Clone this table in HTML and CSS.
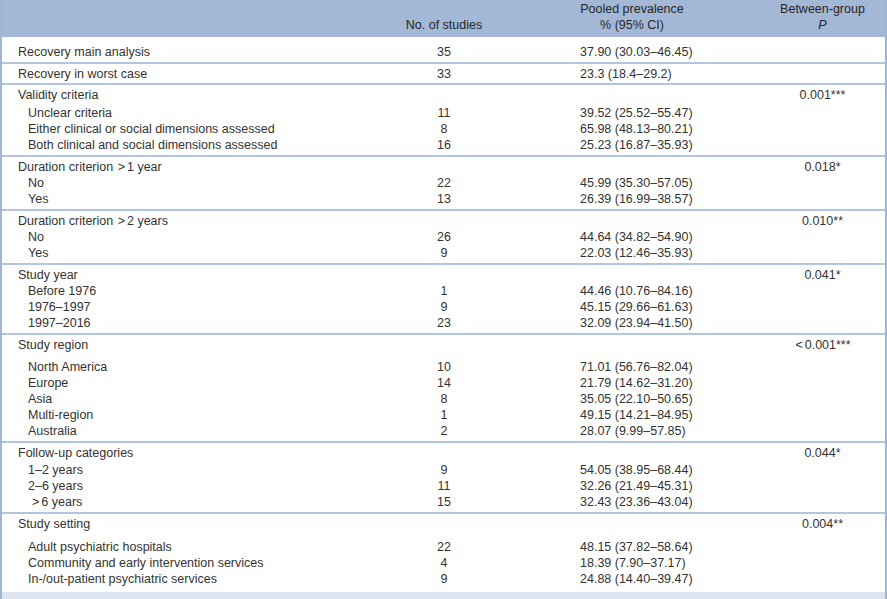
FILE: index.html
```html
<!DOCTYPE html>
<html lang="en">
<head>
<meta charset="utf-8">
<title>Pooled prevalence of recovery</title>
<link rel="stylesheet" href="styles.css">
</head>
<body>
<div class="table">
  <div class="row head">
    <div class="c1"></div>
    <div class="c2"><br>No. of studies</div>
    <div class="c3">Pooled prevalence<br>% (95% CI)</div>
    <div class="c4">Between-group<br><i>P</i></div>
  </div>

  <div class="group single first">
    <div class="row"><div class="c1">Recovery main analysis</div><div class="c2">35</div><div class="c3">37.90 (30.03–46.45)</div><div class="c4"></div></div>
  </div>

  <div class="group single">
    <div class="row"><div class="c1">Recovery in worst case</div><div class="c2">33</div><div class="c3">23.3 (18.4–29.2)</div><div class="c4"></div></div>
  </div>

  <div class="group">
    <div class="row cat gap2"><div class="c1">Validity criteria</div><div class="c2"></div><div class="c3"></div><div class="c4">0.001***</div></div>
    <div class="row sub"><div class="c1">Unclear criteria</div><div class="c2">11</div><div class="c3">39.52 (25.52–55.47)</div><div class="c4"></div></div>
    <div class="row sub"><div class="c1">Either clinical or social dimensions assessed</div><div class="c2">8</div><div class="c3">65.98 (48.13–80.21)</div><div class="c4"></div></div>
    <div class="row sub"><div class="c1">Both clinical and social dimensions assessed</div><div class="c2">16</div><div class="c3">25.23 (16.87–35.93)</div><div class="c4"></div></div>
  </div>

  <div class="group">
    <div class="row cat"><div class="c1">Duration criterion <span class="op">&gt;</span>1 year</div><div class="c2"></div><div class="c3"></div><div class="c4">0.018*</div></div>
    <div class="row sub"><div class="c1">No</div><div class="c2">22</div><div class="c3">45.99 (35.30–57.05)</div><div class="c4"></div></div>
    <div class="row sub"><div class="c1">Yes</div><div class="c2">13</div><div class="c3">26.39 (16.99–38.57)</div><div class="c4"></div></div>
  </div>

  <div class="group">
    <div class="row cat"><div class="c1">Duration criterion <span class="op">&gt;</span>2 years</div><div class="c2"></div><div class="c3"></div><div class="c4">0.010**</div></div>
    <div class="row sub"><div class="c1">No</div><div class="c2">26</div><div class="c3">44.64 (34.82–54.90)</div><div class="c4"></div></div>
    <div class="row sub"><div class="c1">Yes</div><div class="c2">9</div><div class="c3">22.03 (12.46–35.93)</div><div class="c4"></div></div>
  </div>

  <div class="group">
    <div class="row cat"><div class="c1">Study year</div><div class="c2"></div><div class="c3"></div><div class="c4">0.041*</div></div>
    <div class="row sub"><div class="c1">Before 1976</div><div class="c2">1</div><div class="c3">44.46 (10.76–84.16)</div><div class="c4"></div></div>
    <div class="row sub"><div class="c1">1976–1997</div><div class="c2">9</div><div class="c3">45.15 (29.66–61.63)</div><div class="c4"></div></div>
    <div class="row sub"><div class="c1">1997–2016</div><div class="c2">23</div><div class="c3">32.09 (23.94–41.50)</div><div class="c4"></div></div>
  </div>

  <div class="group">
    <div class="row cat gap6"><div class="c1">Study region</div><div class="c2"></div><div class="c3"></div><div class="c4"><span class="op">&lt;</span>0.001***</div></div>
    <div class="row sub"><div class="c1">North America</div><div class="c2">10</div><div class="c3">71.01 (56.76–82.04)</div><div class="c4"></div></div>
    <div class="row sub"><div class="c1">Europe</div><div class="c2">14</div><div class="c3">21.79 (14.62–31.20)</div><div class="c4"></div></div>
    <div class="row sub"><div class="c1">Asia</div><div class="c2">8</div><div class="c3">35.05 (22.10–50.65)</div><div class="c4"></div></div>
    <div class="row sub"><div class="c1">Multi-region</div><div class="c2">1</div><div class="c3">49.15 (14.21–84.95)</div><div class="c4"></div></div>
    <div class="row sub"><div class="c1">Australia</div><div class="c2">2</div><div class="c3">28.07 (9.99–57.85)</div><div class="c4"></div></div>
  </div>

  <div class="group">
    <div class="row cat gap1"><div class="c1">Follow-up categories</div><div class="c2"></div><div class="c3"></div><div class="c4">0.044*</div></div>
    <div class="row sub"><div class="c1">1–2 years</div><div class="c2">9</div><div class="c3">54.05 (38.95–68.44)</div><div class="c4"></div></div>
    <div class="row sub"><div class="c1">2–6 years</div><div class="c2">11</div><div class="c3">32.26 (21.49–45.31)</div><div class="c4"></div></div>
    <div class="row sub"><div class="c1"><span class="op lead">&gt;</span>6 years</div><div class="c2">15</div><div class="c3">32.43 (23.36–43.04)</div><div class="c4"></div></div>
  </div>

  <div class="group last">
    <div class="row cat gap7"><div class="c1">Study setting</div><div class="c2"></div><div class="c3"></div><div class="c4">0.004**</div></div>
    <div class="row sub"><div class="c1">Adult psychiatric hospitals</div><div class="c2">22</div><div class="c3">48.15 (37.82–58.64)</div><div class="c4"></div></div>
    <div class="row sub"><div class="c1">Community and early intervention services</div><div class="c2">4</div><div class="c3">18.39 (7.90–37.17)</div><div class="c4"></div></div>
    <div class="row sub"><div class="c1">In-/out-patient psychiatric services</div><div class="c2">9</div><div class="c3">24.88 (14.40–39.47)</div><div class="c4"></div></div>
  </div>

  <div class="foot"></div>
</div>
</body>
</html>
```

FILE: styles.css
```css
html, body {
  margin: 0;
  padding: 0;
  background: #ffffff;
}

body {
  font-family: "Liberation Sans", Arial, sans-serif;
  font-size: 12.5px;
  color: #333333;
}

.table {
  width: 887px;
  box-sizing: border-box;
  border-left: 2px solid #9fb5d4;
  border-right: 2px solid #9fb5d4;
}

.row {
  display: grid;
  grid-template-columns: 350px 184px 224px 1fr;
  line-height: 16px;
}

.c1 {
  padding-left: 16px;
  white-space: nowrap;
}

.c2 {
  text-align: center;
}

.c3 {
  padding-left: 44px;
  white-space: nowrap;
}

.c4 {
  text-align: center;
  white-space: nowrap;
}

.head {
  background: #a3b8d6;
  height: 37px;
  padding-top: 1px;
  box-sizing: border-box;
  color: #262626;
}

.head .c3 {
  padding-left: 0;
  padding-right: 32px;
  text-align: center;
}

.head i {
  font-style: italic;
}

.group {
  border-top: 2px solid #b3c6e0;
  padding: 2px 0 2px;
}

.group.single {
  padding-bottom: 1px;
}

.group.first {
  border-top: 0;
  padding: 7px 0 2px;
}

.group.last {
  padding-bottom: 5px;
}

.sub .c1 {
  padding-left: 26px;
}

.cat.gap1 {
  padding-bottom: 1px;
}

.cat.gap2 {
  padding-bottom: 2px;
}

.cat.gap6 {
  padding-bottom: 6px;
}

.cat.gap7 {
  padding-bottom: 7px;
}

.op {
  margin: 0 2px 0 1px;
}

.op.lead {
  margin-left: 4px;
}

.foot {
  height: 12px;
  background: #dce4f0;
}
```
